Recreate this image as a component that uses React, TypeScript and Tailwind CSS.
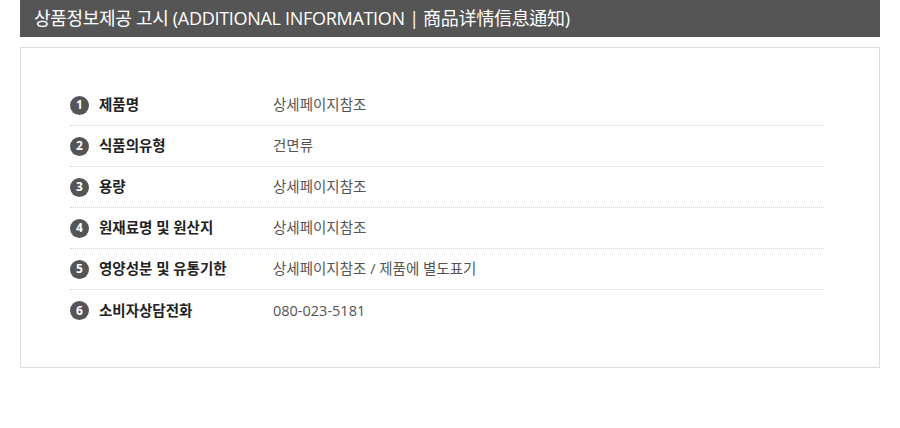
const ROWS = [
  { label: "제품명", value: "상세페이지참조" },
  { label: "식품의유형", value: "건면류" },
  { label: "용량", value: "상세페이지참조" },
  { label: "원재료명 및 원산지", value: "상세페이지참조" },
  { label: "영양성분 및 유통기한", value: "상세페이지참조 / 제품에 별도표기" },
  { label: "소비자상담전화", value: "080-023-5181" },
];

export default function App() {
  return (
    <div
      className="h-[428px] w-[900px] bg-white px-[20px]"
      style={{ fontFamily: '"Open Sans", "Noto Sans CJK KR", sans-serif' }}
    >
      {/* title bar */}
      <div className="flex h-[37px] items-center bg-[#555555] pl-[14px] text-[18px] tracking-[-0.3px] text-white">
        상품정보제공 고시 (ADDITIONAL INFORMATION | 商品详情信息通知)
      </div>

      {/* info box */}
      <div className="mt-[10px] border border-[#dddddd] pb-[36px] pl-[49px] pr-[55px] pt-[37px]">
        {ROWS.map((row, i) => (
          <div
            key={row.label}
            className={
              "flex h-[41px] items-center " +
              (i < ROWS.length - 1 ? "border-b border-dotted border-[#d4d4d4]" : "")
            }
          >
            <div className="flex w-[203px] items-center">
              <span className="flex h-[19px] w-[19px] items-center justify-center rounded-full bg-[#555555] text-[12px] font-bold leading-none text-white">
                {i + 1}
              </span>
              <span className="ml-[10px] text-[14.5px] font-bold text-[#222222]">{row.label}</span>
            </div>
            <span className="text-[14.5px] text-[#555555]">{row.value}</span>
          </div>
        ))}
      </div>
    </div>
  );
}
